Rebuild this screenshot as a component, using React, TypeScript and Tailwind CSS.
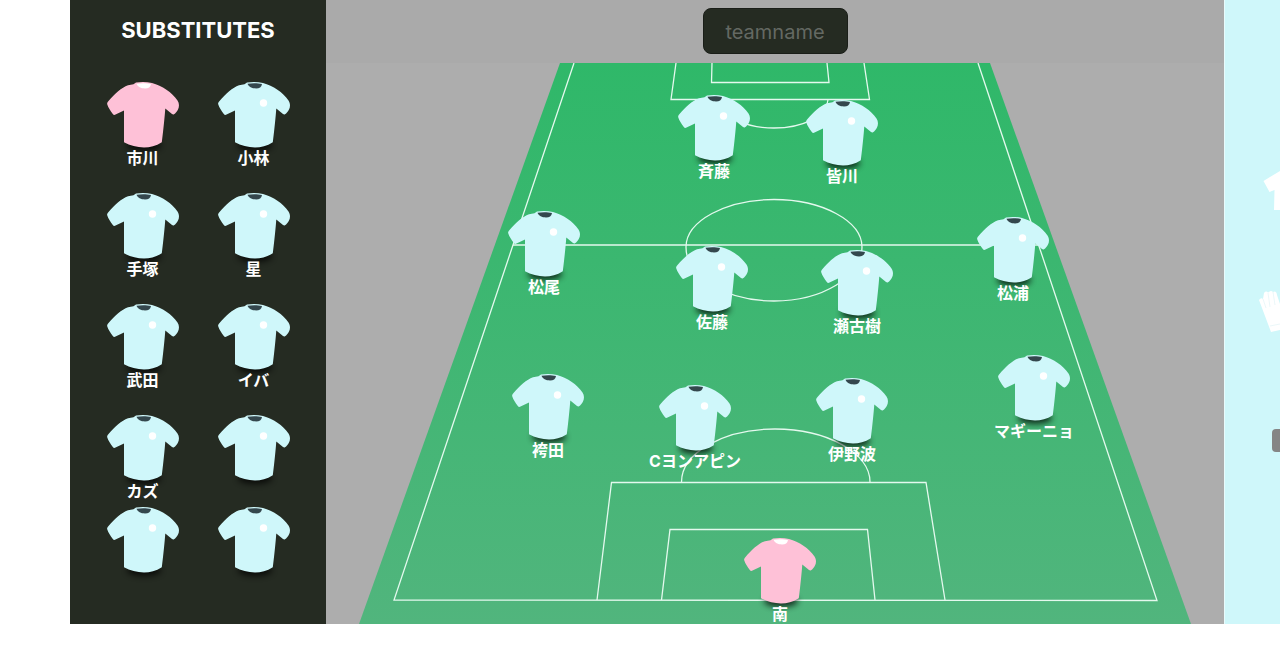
import { useState } from 'react';

type Player = {
  name: string;
  keeper?: boolean;
};

type FieldPlayer = Player & { x: number; y: number };

const BOARD_WIDTH = 898;
const BOARD_HEIGHT = 624;

const substitutes: Player[] = [
  { name: '市川', keeper: true },
  { name: '小林' },
  { name: '手塚' },
  { name: '星' },
  { name: '武田' },
  { name: 'イバ' },
  { name: 'カズ' },
  { name: '' },
  { name: '' },
  { name: '' },
];

// x is the centre of the shirt, y its top edge, both in board units
const lineup: FieldPlayer[] = [
  { name: '斉藤', x: 388, y: 95 },
  { name: '皆川', x: 516, y: 100 },
  { name: '松尾', x: 218, y: 211 },
  { name: '松浦', x: 687, y: 217 },
  { name: '佐藤', x: 386, y: 246 },
  { name: '瀬古樹', x: 531, y: 250 },
  { name: '袴田', x: 222, y: 374 },
  { name: 'Cヨンアピン', x: 369, y: 385 },
  { name: '伊野波', x: 526, y: 378 },
  { name: 'マギーニョ', x: 708, y: 355 },
  { name: '南', x: 454, y: 538, keeper: true },
];

const Shirt = ({ keeper = false }: { keeper?: boolean }) => (
  <svg viewBox="0 0 72 66" className="block h-[66px] w-[72px] shrink-0 overflow-visible" aria-hidden="true">
    <ellipse cx="37" cy="63" rx="17" ry="6" fill="#000" opacity="0.75" className="blur-[3px]" />
    <path
      d="M29 .5 C34 -.4 40 -.3 45 1 C55 3.500 65 10.500 70.500 18.500 C72.500 21.500 72.300 25 71 27.500 C70 29.500 68.500 31.300 67 32.300 Q66 32.800 65 32 L58.300 26.500 Q57.500 38 54.800 60.300 C49 64 43 65.500 37 65.500 C30 65.500 23 63.500 17 60.300 V28.600 L8 32.800 Q6.700 33.300 5.800 32 C3.300 28.800 1.200 25.500 .2 22.300 Q-.2 21 .9 19.800 C8 11.500 14.500 5.500 21 3.200 L26.500 2.300 Z"
      fill={keeper ? '#fec1d7' : '#cff7fa'}
    />
    <path
      d="M29.500 1.800 C34 .9 40 1 44 2 C43.500 5 41.500 6.500 38 6.500 C34 6.500 30.500 4.800 29.500 1.800 Z"
      fill={keeper ? '#ffffff' : '#34474d'}
    />
    {!keeper && <circle cx="45.500" cy="21" r="3.700" fill="#fff" />}
  </svg>
);

const PlayerButton = ({ name, keeper }: Player) => (
  <button type="button" aria-label={name || 'Empty slot'} className="flex w-[72px] flex-col items-center">
    <Shirt keeper={keeper} />
    <span className="relative h-5 text-base leading-5 font-bold whitespace-nowrap text-white">{name}</span>
  </button>
);

const Pitch = () => (
  <svg viewBox="0 0 898 561" className="block h-auto w-full" aria-hidden="true">
    <defs>
      <linearGradient id="grass" x1="0" y1="0" x2="0" y2="1">
        <stop offset="0" stopColor="#2fb869" />
        <stop offset="1" stopColor="#51b57d" />
      </linearGradient>
    </defs>
    <path d="M234 0 H664 L865 561 H33 Z" fill="url(#grass)" />
    <g fill="none" stroke="#e4f9ee" strokeWidth="1.300">
      {/* Touchlines */}
      <path d="M248 0 L68 537 L831 537.500 L652 0" />
      {/* Halfway line and centre circle */}
      <path d="M187 182 H713" />
      <path d="M360 184 C360 158 400 136.500 448 136.500 C496 136.500 536 158 536 184 C536 214 496 238 448 238 C400 238 360 214 360 184 Z" />
      {/* Far goal */}
      <path d="M350 0 L345 36.500 H543.500 L538 0" />
      <path d="M386 0 L385.500 19.500 H503 L501 0" />
      <path d="M395 36.500 C396 54 420 65 448 65 C476 65 500 54 502 36.500" />
      {/* Near goal */}
      <path d="M271 537 L285.500 419.500 H600 L619 537" />
      <path d="M335.500 537 L344 466.500 H541.500 L549 537" />
      <path d="M355.500 419 C355.500 390 397 366 449 366 C501 366 544 390 544 419" />
    </g>
  </svg>
);

const Substitutes = () => (
  <aside className="w-64 shrink-0 bg-[#252b22]">
    <h2 className="pt-4 text-center text-[22px] leading-7 font-bold text-white">SUBSTITUTES</h2>
    <div className="mt-[38px] grid grid-cols-[72px_72px] grid-rows-[111px_111px_111px_92px_92px] justify-center gap-x-[39px]">
      {substitutes.map((player, index) => (
        <PlayerButton key={index} {...player} />
      ))}
    </div>
  </aside>
);

const Board = () => {
  const [teamName, setTeamName] = useState('');

  return (
    <main className="relative min-w-0 flex-1 bg-[#adadad]">
      <div className="flex h-[63px] justify-center bg-[#aaaaaa] pt-2">
        <input
          aria-label="Team name"
          placeholder="teamname"
          value={teamName}
          onChange={(e) => setTeamName(e.target.value)}
          className="h-[46px] w-[145px] rounded-lg border border-[#1a1e18] bg-[#252b22] pt-0.5 text-center text-xl text-white placeholder:text-[#646963]"
        />
      </div>
      <Pitch />
      {lineup.map((player) => (
        <div
          key={player.name}
          className="absolute -translate-x-1/2"
          style={{
            left: `${(player.x / BOARD_WIDTH) * 100}%`,
            top: `${(player.y / BOARD_HEIGHT) * 100}%`,
          }}
        >
          <PlayerButton {...player} />
        </div>
      ))}
    </main>
  );
};

const KitPanel = () => (
  <aside className="flex w-14 shrink-0 flex-col items-end overflow-hidden border-l border-[#e8fbfc] bg-[#cff7fa] pt-[168px]">
    <svg viewBox="0 0 17 44" className="h-11 w-[17px]" aria-hidden="true">
      <path d="M17 3 L.5 13 L6.500 24 L11.500 22 L11 42 H17 Z" fill="#fff" />
    </svg>
    <svg viewBox="0 0 22 42" className="mt-[79px] h-[42px] w-[22px]" aria-hidden="true">
      <path
        d="M1 9 Q3 6 5 8 L6 2 Q8 -.5 10 1.500 L11 1 Q13 -1 15 1 L17 .5 Q19 1 19 4 L22 13 V39 L13 41 Z"
        fill="#fff"
      />
      <path d="M5 8 L8 17 M10 2 L12 16 M15 1 L17 14 M12 35 L22 33" stroke="#e3f4f6" strokeWidth=".7" fill="none" />
    </svg>
    <button type="button" aria-label="Kit options" className="mt-[96px] h-[23px] w-2 rounded-l bg-[#858585]" />
  </aside>
);

export default function App() {
  return (
    <div className="flex overflow-hidden bg-white pl-[70px] font-[Inter,'Noto_Sans_CJK_JP',sans-serif]">
      <Substitutes />
      <Board />
      <KitPanel />
    </div>
  );
}
